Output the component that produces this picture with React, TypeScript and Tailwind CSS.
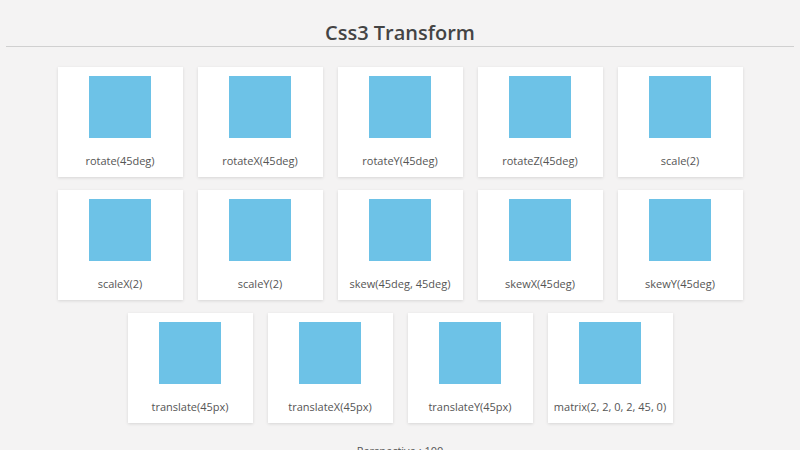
import React from "react";

const rows = [
  ["rotate(45deg)", "rotateX(45deg)", "rotateY(45deg)", "rotateZ(45deg)", "scale(2)"],
  ["scaleX(2)", "scaleY(2)", "skew(45deg, 45deg)", "skewX(45deg)", "skewY(45deg)"],
  ["translate(45px)", "translateX(45px)", "translateY(45px)", "matrix(2, 2, 0, 2, 45, 0)"],
];

function Card({ label }: { label: string }) {
  return (
    <div className="w-[125px] h-[110px] bg-white shadow-[0_1px_3px_rgba(0,0,0,0.12)] flex flex-col items-center pt-[9px]">
      <div className="w-[62px] h-[62px] bg-[#6dc2e7]" />
      <div className="mt-[16px] text-[11px] leading-[14px] text-[#555]">{label}</div>
    </div>
  );
}

export default function App() {
  return (
    <div className="w-[800px] h-[450px] overflow-hidden bg-[#f4f3f3] font-['Open_Sans',sans-serif]">
      <div className="pt-[21px] h-[46px] text-center text-[20px] leading-[24px] font-semibold text-[#444]">
        Css3 Transform
      </div>
      <div className="mx-[6px] border-t border-[#d0d0d0]" />
      <div className="mt-[20px] flex flex-col items-center gap-[13px]">
        {rows.map((r, i) => (
          <div key={i} className="flex gap-[15px]">
            {r.map((l) => (
              <Card key={l} label={l} />
            ))}
          </div>
        ))}
      </div>
      <div className="mt-[21px] text-center text-[11px] leading-[14px] text-[#555]">Perspective : 100</div>
    </div>
  );
}
